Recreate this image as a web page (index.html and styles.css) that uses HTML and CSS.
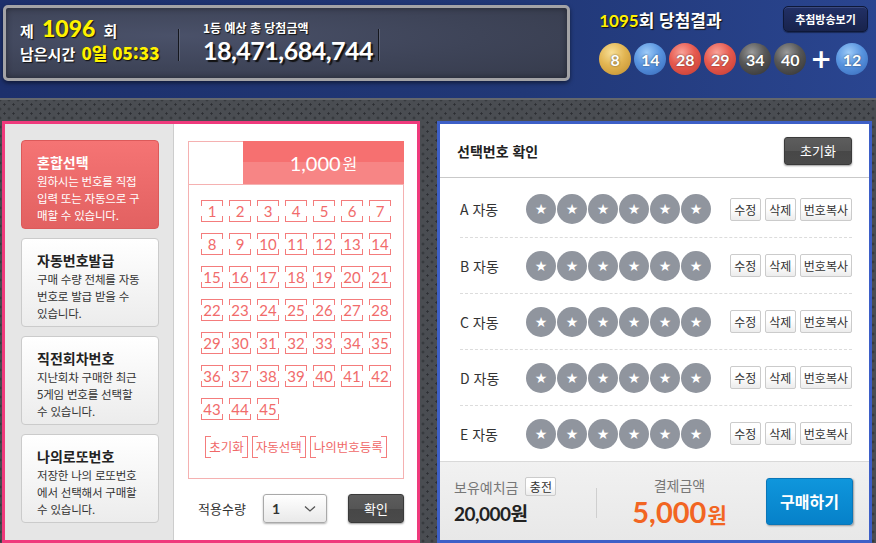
FILE: index.html
```html
<!DOCTYPE html>
<html lang="ko">
<head>
    <meta charset="UTF-8">
    <meta name="viewport" content="width=device-width, initial-scale=1.0">
    <title>로또 6/45 구매</title>
    <link rel="stylesheet" href="styles.css">
</head>
<body>

<div class="top">
    <div class="draw-box">
        <div class="draw-info">
            <div class="draw-no">제 <b class="yellow">1096</b> 회</div>
            <div class="remain">남은시간 <b class="yellow">0일 05:33</b></div>
        </div>
        <div class="sep"></div>
        <div class="prize">
            <div class="prize-label">1등 예상 총 당첨금액</div>
            <div class="prize-amount">18,471,684,744</div>
        </div>
        <div class="sep"></div>
    </div>
    <div class="result">
        <div class="result-head">
            <div class="result-title"><span class="yellow">1095</span>회 당첨결과</div>
            <button class="watch-btn">추첨방송보기</button>
        </div>
        <div class="result-balls">
            <span class="ball gold">8</span>
            <span class="ball blue">14</span>
            <span class="ball red">28</span>
            <span class="ball red">29</span>
            <span class="ball gray">34</span>
            <span class="ball gray">40</span>
            <span class="plus">+</span>
            <span class="ball blue">12</span>
        </div>
    </div>
</div>

<div class="main">
    <div class="left-panel">
        <div class="menu">
            <div class="menu-card active">
                <div class="menu-title">혼합선택</div>
                <div class="menu-desc">원하시는 번호를 직접<br>입력 또는 자동으로 구<br>매할 수 있습니다.</div>
            </div>
            <div class="menu-card">
                <div class="menu-title">자동번호발급</div>
                <div class="menu-desc">구매 수량 전체를 자동<br>번호로 발급 받을 수<br>있습니다.</div>
            </div>
            <div class="menu-card">
                <div class="menu-title">직전회차번호</div>
                <div class="menu-desc">지난회차 구매한 최근<br>5게임 번호를 선택할<br>수 있습니다.</div>
            </div>
            <div class="menu-card">
                <div class="menu-title">나의로또번호</div>
                <div class="menu-desc">저장한 나의 로또번호<br>에서 선택해서 구매할<br>수 있습니다.</div>
            </div>
        </div>

        <div class="picker">
            <div class="paper">
                <div class="paper-head">
                    <div class="paper-blank"></div>
                    <div class="price">1,000<small>원</small></div>
                </div>
                <div class="num-grid" id="num-grid">
                    <!-- 1~45 번호는 스크립트로 생성 -->
                </div>
                <div class="paper-btns">
                    <span class="bracket-btn">초기화</span>
                    <span class="bracket-btn">자동선택</span>
                    <span class="bracket-btn">나의번호등록</span>
                </div>
            </div>
            <div class="qty-row">
                <span class="qty-label">적용수량</span>
                <div class="qty-select">
                    <b>1</b>
                    <svg width="12" height="8" viewBox="0 0 12 8"><polyline points="1,1.5 6,6 11,1.5" fill="none" stroke="#555" stroke-width="1.3"/></svg>
                </div>
                <button class="dark-btn confirm-btn">확인</button>
            </div>
        </div>
    </div>

    <div class="right-panel">
        <div class="sel-head">
            <h3>선택번호 확인</h3>
            <button class="dark-btn reset-btn">초기화</button>
        </div>
        <div class="sel-rows" id="sel-rows">
            <!-- A~E 게임 행은 스크립트로 생성 -->
        </div>
        <div class="pay-bar">
            <div class="balance">
                <div class="balance-top">
                    <span class="gray-label">보유예치금</span>
                    <button class="small-btn charge-btn">충전</button>
                </div>
                <div class="balance-amount">20,000원</div>
            </div>
            <div class="pay-sep"></div>
            <div class="pay">
                <div class="gray-label">결제금액</div>
                <div class="pay-amount">5,000<small>원</small></div>
            </div>
            <button class="buy-btn">구매하기</button>
        </div>
    </div>
</div>

<script>
    const grid = document.getElementById('num-grid');
    for (let i = 1; i <= 45; i++) {
        const cell = document.createElement('span');
        cell.className = 'num';
        cell.innerText = i;
        grid.appendChild(cell);
    }

    const rows = document.getElementById('sel-rows');
    const games = ['A', 'B', 'C', 'D', 'E'];
    for (const game of games) {
        const row = document.createElement('div');
        row.className = 'sel-row';

        const label = document.createElement('span');
        label.className = 'sel-label';
        label.innerText = game + ' 자동';
        row.appendChild(label);

        const balls = document.createElement('div');
        balls.className = 'star-balls';
        for (let i = 0; i < 6; i++) {
            const ball = document.createElement('span');
            ball.className = 'star-ball';
            balls.appendChild(ball);
        }
        row.appendChild(balls);

        const btns = document.createElement('div');
        btns.className = 'row-btns';
        for (const text of ['수정', '삭제', '번호복사']) {
            const btn = document.createElement('button');
            btn.className = 'small-btn';
            btn.innerText = text;
            btns.appendChild(btn);
        }
        row.appendChild(btns);

        rows.appendChild(row);
    }
</script>

</body>
</html>
```

FILE: styles.css
```css
body {
    margin: 0;
    width: 876px;
    height: 543px;
    overflow: hidden;
    font-family: "Noto Sans CJK KR", "Noto Sans", sans-serif;
    color: #333;
    background-color: #474a4f;
}
button {
    font-family: inherit;
    cursor: pointer;
    padding: 0;
}
.yellow {
    color: #fff200;
}

/* 상단 회차 정보 */
.top {
    height: 98px;
    display: flex;
    background: linear-gradient(90deg, #1d306c 0%, #213877 60%, #2a4590 100%);
}
.draw-box {
    box-sizing: border-box;
    width: 569px;
    height: 76px;
    margin: 5px 0 0 3px;
    border: 3px solid #a3a3a6;
    border-radius: 5px;
    background: radial-gradient(ellipse at 30% 40%, #4a5169 0%, #3e4458 55%, #363b4c 100%);
    box-shadow: 0 2px 4px rgba(0, 0, 0, 0.5), inset 0 0 6px rgba(0, 0, 0, 0.4);
    display: flex;
    align-items: center;
    padding-left: 14px;
    color: #fff;
    text-shadow: 1px 1px 1px #111;
}
.draw-info {
    width: 158px;
    font-weight: 700;
    font-size: 15px;
}
.draw-no {
    line-height: 22px;
    margin-top: -4px;
}
.draw-no b {
    font-family: Lato, sans-serif;
    font-size: 23px;
    margin: 0 4px;
}
.remain {
    line-height: 22px;
}
.remain b {
    font-size: 17px;
    margin-left: 2px;
}
.sep {
    width: 1px;
    height: 32px;
    background-color: #15171e;
    border-right: 1px solid #5d6376;
    margin-top: 4px;
}
.prize {
    width: 175px;
    margin-left: 23px;
}
.prize-label {
    font-size: 12px;
    font-weight: 700;
    line-height: 16px;
    margin-top: -2px;
}
.prize-amount {
    font-family: Lato, sans-serif;
    font-weight: 700;
    font-size: 25px;
    line-height: 28px;
    letter-spacing: -0.5px;
    text-shadow: 2px 2px 1px #111;
}

.result {
    flex: 1;
    padding: 6px 8px 0 29px;
}
.result-head {
    display: flex;
    justify-content: space-between;
    align-items: center;
    height: 26px;
}
.result-title {
    color: #fff;
    font-size: 17px;
    font-weight: 700;
    text-shadow: 1px 1px 1px #111;
}
.result-title .yellow {
    font-family: Lato, sans-serif;
}
.watch-btn {
    width: 85px;
    height: 26px;
    border: 1px solid #0e1838;
    border-radius: 5px;
    background: linear-gradient(#223066, #18234c);
    box-shadow: inset 0 1px 0 #3b4a80, 0 1px 1px rgba(0, 0, 0, 0.4);
    color: #fff;
    font-size: 11px;
    font-weight: 700;
}
.result-balls {
    display: flex;
    align-items: center;
    gap: 3px;
    margin-top: 11px;
}
.ball {
    width: 32px;
    height: 32px;
    border-radius: 50%;
    display: flex;
    align-items: center;
    justify-content: center;
    color: #fff;
    font-family: Lato, sans-serif;
    font-weight: 700;
    font-size: 16px;
    text-shadow: 0 0 2px rgba(0, 0, 0, 0.6);
}
.gold {
    background: radial-gradient(circle at 40% 30%, #f7df97 0%, #e2b552 45%, #bf8d2e 100%);
}
.blue {
    background: radial-gradient(circle at 40% 30%, #9ccaf7 0%, #5894e0 45%, #3466b6 100%);
}
.red {
    background: radial-gradient(circle at 40% 30%, #f8a197 0%, #e6594e 45%, #c13a30 100%);
}
.gray {
    background: radial-gradient(circle at 40% 30%, #9a9a9a 0%, #575757 45%, #2f2f2f 100%);
}
.plus {
    color: #fff;
    font-family: "DejaVu Sans", sans-serif;
    font-weight: 700;
    font-size: 26px;
    line-height: 32px;
    margin: 0 1px;
}

/* 본문 */
.main {
    height: 445px;
    box-sizing: border-box;
    border-top: 2px solid #64676c;
    padding: 21px 0 0 2px;
    display: flex;
    background-color: #4a4d52;
    background-image:
        radial-gradient(circle, #2c2e32 0.9px, transparent 1.3px),
        radial-gradient(circle, #2c2e32 0.9px, transparent 1.3px);
    background-size: 9px 9px;
    background-position: 0 0, 4.5px 4.5px;
}
.left-panel {
    box-sizing: border-box;
    width: 418px;
    height: 422px;
    border: 3px solid #ef3a7c;
    background-color: #fff;
    display: flex;
}
.menu {
    box-sizing: border-box;
    width: 169px;
    height: 100%;
    background-color: #e6e6e6;
    border-right: 1px solid #cdcdcd;
    padding: 16px 0 0 16px;
    display: flex;
    flex-direction: column;
    gap: 9px;
}
.menu-card {
    box-sizing: border-box;
    width: 138px;
    height: 89px;
    border: 1px solid #cbcbcb;
    border-radius: 4px;
    background: linear-gradient(#ffffff, #ececec);
    padding: 10px 0 0 15px;
}
.menu-card.active {
    border-color: #dc5a5a;
    background: linear-gradient(#f57474, #e26161);
    color: #fff;
}
.menu-title {
    font-size: 14px;
    font-weight: 700;
    line-height: 22px;
    color: #222;
}
.menu-card.active .menu-title,
.menu-card.active .menu-desc {
    color: #fff;
}
.menu-desc {
    font-size: 11.5px;
    line-height: 17px;
    white-space: nowrap;
    color: #333;
    letter-spacing: -0.2px;
}

.picker {
    flex: 1;
    padding: 17px 0 0 14px;
}
.paper {
    box-sizing: border-box;
    width: 216px;
    border: 1px solid #f5b1b1;
    padding-bottom: 20px;
}
.paper-head {
    display: flex;
    height: 42px;
    border-bottom: 1px solid #f5b1b1;
}
.paper-blank {
    width: 54px;
}
.price {
    flex: 1;
    margin: -1px -1px 0 0;
    background: linear-gradient(#f67070 0%, #f67070 50%, #f78585 50%, #f78585 100%);
    color: #fff;
    font-family: Lato, sans-serif;
    font-weight: 400;
    font-size: 20px;
    display: flex;
    align-items: center;
    justify-content: center;
}
.price small {
    font-family: "Noto Sans CJK KR", sans-serif;
    font-size: 16px;
    margin-left: 2px;
}
.num-grid {
    display: grid;
    grid-template-columns: repeat(7, 22px);
    column-gap: 6px;
    row-gap: 11px;
    padding: 15px 0 0 12px;
}
.num {
    box-sizing: border-box;
    width: 22px;
    height: 22px;
    border-top: 1px solid #f47c7c;
    border-bottom: 1px solid #f47c7c;
    background:
        linear-gradient(#f47c7c, #f47c7c) left top / 1px 5px no-repeat,
        linear-gradient(#f47c7c, #f47c7c) right top / 1px 5px no-repeat,
        linear-gradient(#f47c7c, #f47c7c) left bottom / 1px 5px no-repeat,
        linear-gradient(#f47c7c, #f47c7c) right bottom / 1px 5px no-repeat;
    color: #f16b6b;
    font-family: Lato, sans-serif;
    font-size: 15px;
    line-height: 20px;
    text-align: center;
}
.paper-btns {
    display: flex;
    justify-content: center;
    gap: 4px;
    margin-top: 16px;
}
.bracket-btn {
    box-sizing: border-box;
    height: 22px;
    padding: 0 3px;
    border-left: 1px solid #f47c7c;
    border-right: 1px solid #f47c7c;
    background:
        linear-gradient(#f47c7c, #f47c7c) left top / 5px 1px no-repeat,
        linear-gradient(#f47c7c, #f47c7c) right top / 5px 1px no-repeat,
        linear-gradient(#f47c7c, #f47c7c) left bottom / 5px 1px no-repeat,
        linear-gradient(#f47c7c, #f47c7c) right bottom / 5px 1px no-repeat;
    color: #f06868;
    font-size: 12.5px;
    line-height: 21px;
}
.qty-row {
    display: flex;
    align-items: center;
    margin-top: 15px;
    padding-left: 10px;
}
.qty-label {
    width: 65px;
    font-size: 13px;
    color: #333;
}
.qty-select {
    box-sizing: border-box;
    width: 64px;
    height: 29px;
    border: 1px solid #a9a9a9;
    border-radius: 3px;
    background: linear-gradient(#ffffff, #e9e9e9);
    box-shadow: 0 1px 2px rgba(0, 0, 0, 0.3);
    display: flex;
    align-items: center;
    justify-content: space-between;
    padding: 0 10px 0 8px;
}
.qty-select b {
    font-family: Lato, sans-serif;
    font-size: 14px;
    color: #333;
}
.dark-btn {
    border: 1px solid #3a3a3a;
    border-radius: 3px;
    background: linear-gradient(#5d5d5d 0%, #555 50%, #474747 50%, #4a4a4a 100%);
    box-shadow: 0 1px 2px rgba(0, 0, 0, 0.4);
    color: #fff;
    font-size: 13px;
}
.confirm-btn {
    width: 56px;
    height: 29px;
    margin-left: 21px;
}

/* 선택번호 확인 */
.right-panel {
    box-sizing: border-box;
    width: 435px;
    height: 422px;
    margin-left: 17px;
    border: 3px solid #3d5fc7;
    background-color: #fff;
    display: flex;
    flex-direction: column;
}
.sel-head {
    box-sizing: border-box;
    height: 54px;
    border-bottom: 1px solid #c9c9c9;
    display: flex;
    align-items: center;
    justify-content: space-between;
    padding: 0 17px 0 17px;
}
.sel-head h3 {
    margin: 0;
    font-size: 14px;
    font-weight: 700;
    color: #222;
}
.reset-btn {
    width: 68px;
    height: 28px;
}
.sel-rows {
    padding: 3px 17px 0 20px;
}
.sel-row {
    box-sizing: border-box;
    height: 56px;
    display: flex;
    align-items: center;
}
.sel-row + .sel-row {
    border-top: 1px dashed #dcdcdc;
}
.sel-label {
    width: 66px;
    font-size: 14px;
    color: #333;
}
.star-balls {
    display: flex;
    gap: 1px;
}
.star-ball {
    width: 30px;
    height: 30px;
    border-radius: 50%;
    background-color: #90959e;
    display: flex;
    align-items: center;
    justify-content: center;
}
.star-ball::before {
    content: "★";
    color: #fff;
    font-family: "DejaVu Sans", sans-serif;
    font-size: 14px;
    line-height: 1;
}
.row-btns {
    display: flex;
    gap: 4px;
    margin-left: auto;
}
.small-btn {
    box-sizing: border-box;
    height: 23px;
    min-width: 31px;
    padding: 0 3px;
    border: 1px solid #cbcbcb;
    border-radius: 2px;
    background: linear-gradient(#ffffff 0%, #ffffff 45%, #ececec 100%);
    color: #333;
    font-size: 12px;
}

.pay-bar {
    flex: 1;
    border-top: 1px solid #d9d9d9;
    background: linear-gradient(#f1f1f1, #e8e8e8);
    display: flex;
    align-items: center;
    padding: 0 16px 0 14px;
}
.balance {
    width: 142px;
}
.balance-top {
    display: flex;
    align-items: center;
    gap: 7px;
    height: 20px;
}
.gray-label {
    font-size: 14px;
    color: #777;
    line-height: 20px;
}
.charge-btn {
    height: 19px;
    width: 30px;
    font-size: 12px;
    padding: 0;
}
.balance-amount {
    margin-top: 5px;
    font-family: Lato, "Noto Sans CJK KR", sans-serif;
    font-size: 19px;
    font-weight: 700;
    color: #222;
    line-height: 24px;
    letter-spacing: -0.5px;
}
.pay-sep {
    width: 1px;
    height: 30px;
    background-color: #cfcfcf;
    margin-top: 4px;
}
.pay {
    width: 165px;
    text-align: center;
}
.pay .gray-label {
    line-height: 18px;
}
.pay-amount {
    margin-top: 3px;
    color: #f26522;
    font-family: Lato, sans-serif;
    font-weight: 700;
    font-size: 29px;
    line-height: 30px;
}
.pay-amount small {
    font-family: "Noto Sans CJK KR", sans-serif;
    font-size: 21px;
    line-height: 24px;
    margin-left: 1px;
}
.buy-btn {
    width: 87px;
    height: 47px;
    margin-left: 4px;
    border: 1px solid #0a76b8;
    border-radius: 3px;
    background: linear-gradient(#0f96dc, #0681c9);
    box-shadow: 1px 1px 2px rgba(0, 0, 0, 0.35);
    color: #fff;
    font-size: 16px;
    font-weight: 700;
}
```
